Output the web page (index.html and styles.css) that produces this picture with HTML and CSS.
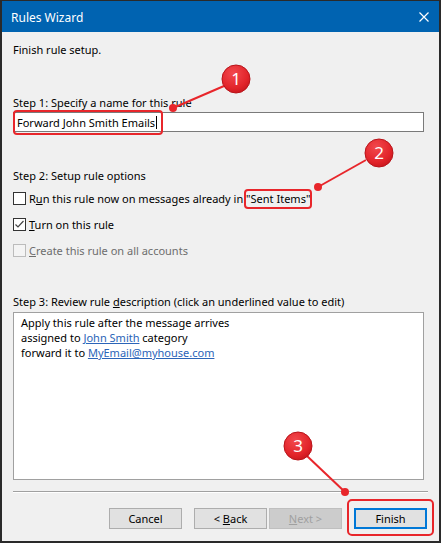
FILE: index.html
```html
<!DOCTYPE html>
<html lang="en">
<head>
  <meta charset="UTF-8" />
  <title>Rules Wizard</title>
  <link rel="stylesheet" href="styles.css">
</head>
<body>

  <div class="window">
    <div class="titlebar">
      <span class="title">Rules Wizard</span>
      <svg class="close" width="10" height="10" viewBox="0 0 10 10">
        <path d="M0.5 0.5 L9.5 9.5 M9.5 0.5 L0.5 9.5" stroke="#fff" stroke-width="1.2" />
      </svg>
    </div>

    <div class="content">
      <div class="intro">Finish rule setup.</div>

      <div class="step step-name">
        <div class="step-label">Step 1: Specify a name for this rule</div>
        <div class="textbox">
          <span class="callout callout-name">Forward John Smith Emails<span class="caret"></span></span>
        </div>
      </div>

      <div class="step step-options">
        <div class="step-label">Step 2: Setup rule options</div>
        <div class="option">
          <span class="check"></span>
          <span>R<u>u</u>n this rule now on messages already in <span class="callout callout-folder">"Sent Items"</span></span>
        </div>
        <div class="option">
          <span class="check checked">
            <svg width="11" height="11" viewBox="0 0 11 11"><path d="M1.5 5.5 L4 8 L9.5 2" fill="none" stroke="#444" stroke-width="1.2" /></svg>
          </span>
          <span><u>T</u>urn on this rule</span>
        </div>
        <div class="option disabled">
          <span class="check"></span>
          <span><u>C</u>reate this rule on all accounts</span>
        </div>
      </div>

      <div class="step step-review">
        <div class="step-label">Step 3: Review rule <u>d</u>escription (click an underlined value to edit)</div>
        <div class="description">
          <div>Apply this rule after the message arrives</div>
          <div>assigned to <a href="#">John Smith</a> category</div>
          <div>forward it to <a href="#">MyEmail@myhouse.com</a></div>
        </div>
      </div>

      <div class="separator"></div>

      <div class="buttons">
        <button class="btn">Cancel</button>
        <button class="btn back">&lt; <u>B</u>ack</button>
        <button class="btn" disabled><u>N</u>ext &gt;</button>
        <span class="callout callout-finish"><button class="btn default">Finish</button></span>
      </div>
    </div>

    <!-- red annotation marks drawn over the dialog -->
    <svg class="marks" width="441" height="543" viewBox="0 0 441 543">
      <defs>
        <radialGradient id="badge" cx="0.4" cy="0.3" r="0.75">
          <stop offset="0" stop-color="#f2494e" />
          <stop offset="0.7" stop-color="#e2242a" />
          <stop offset="1" stop-color="#c8161c" />
        </radialGradient>
      </defs>
      <g stroke="#e8262b" stroke-width="2" fill="#e8262b">
        <line x1="224" y1="86" x2="173" y2="108" />
        <circle cx="173" cy="108" r="4" stroke="none" />
        <line x1="366" y1="160" x2="318" y2="187" />
        <circle cx="318" cy="187" r="4" stroke="none" />
        <line x1="307" y1="456" x2="345" y2="492" />
        <circle cx="345" cy="492" r="4" stroke="none" />
      </g>
      <g class="badge">
        <circle cx="236" cy="79" r="14" />
        <text x="236" y="85">1</text>
      </g>
      <g class="badge">
        <circle cx="379" cy="153" r="14" />
        <text x="379" y="159">2</text>
      </g>
      <g class="badge">
        <circle cx="298" cy="446" r="14" />
        <text x="298" y="452">3</text>
      </g>
    </svg>
  </div>

</body>
</html>
```

FILE: styles.css
```css
:root {
  --title-bg: #0063b1;
  --dialog-bg: #f0f0f0;
  --text-color: #000;
  --muted: #6d6d6d;
  --mark-red: #e8262b;
  --link: #2b64b8;
}

body {
  margin: 0;
  font-family: 'Noto Sans', 'Open Sans', sans-serif;
  font-size: 11px;
  line-height: 15px;
  color: var(--text-color);
}

.window {
  position: relative;
  width: 441px;
  height: 543px;
  box-sizing: border-box;
  border: 2px solid #2a2a2a;
  border-top-width: 1px;
  background-color: var(--dialog-bg);
  overflow: hidden;
}

.titlebar {
  display: flex;
  align-items: center;
  justify-content: space-between;
  height: 31px;
  padding: 0 10px 0 9px;
  background-color: var(--title-bg);
  color: white;
}

.title {
  font-size: 12px;
  padding-top: 1px;
}

.close {
  display: block;
}

.content {
  padding: 10px 11px 0 11px;
}

.step-label {
  white-space: nowrap;
}

.step-name {
  margin-top: 38px;
}

.textbox {
  margin: 2px 4px 0 0;
  height: 18px;
  border: 1px solid #7a7a7a;
  background: white;
  display: flex;
  align-items: center;
  padding-left: 3px;
}

.caret {
  display: inline-block;
  width: 1px;
  height: 13px;
  margin-left: 1px;
  background: #000;
  vertical-align: -2px;
}

.callout {
  position: relative;
}

.callout::after {
  content: "";
  position: absolute;
  border: 2px solid var(--mark-red);
  border-radius: 4px;
  pointer-events: none;
}

.callout-name::after {
  inset: -5px -6px -5px -4px;
}

.callout-folder::after {
  inset: -2px -2px -3px -2px;
}

.callout-finish::after {
  inset: -9px -7px -7px -7px;
  border-radius: 5px;
}

.step-options {
  margin-top: 36px;
}

.option {
  display: flex;
  align-items: center;
  gap: 3px;
  margin-top: 11px;
  white-space: nowrap;
}

.step-options .step-label + .option {
  margin-top: 8px;
}

.check {
  width: 11px;
  height: 11px;
  border: 1px solid #333;
  background: white;
  display: flex;
  align-items: center;
  justify-content: center;
}

.option.disabled {
  color: var(--muted);
}

.option.disabled .check {
  border-color: #bcbcbc;
  background: #f4f4f4;
}

.step-review {
  margin-top: 36px;
}

.description {
  margin: 3px 4px 0 0;
  height: 162px;
  border: 1px solid #a0a0a0;
  background: white;
  padding: 2px 7px;
}

.description a {
  color: var(--link);
}

.separator {
  margin-top: 11px;
  border-top: 1px solid #a0a0a0;
  border-bottom: 1px solid #fff;
}

.buttons {
  display: flex;
  justify-content: flex-end;
  margin-top: 15px;
  padding-right: 1px;
}

.btn {
  width: 73px;
  height: 21px;
  padding: 0;
  font: inherit;
  color: var(--text-color);
  background: #e1e1e1;
  border: 1px solid #adadad;
}

.btn.back {
  margin: 0 2px 0 12px;
}

.btn:disabled {
  color: #a0a0a0;
  background: #cccccc;
  border-color: #bfbfbf;
}

.callout-finish {
  margin-left: 12px;
  display: flex;
}

.btn.default {
  border: 2px solid #0078d7;
}

.marks {
  position: absolute;
  top: -1px;
  left: -2px;
  pointer-events: none;
}

.badge circle {
  fill: url(#badge);
  stroke: #b8141a;
  stroke-width: 1;
}

.badge text {
  fill: white;
  font-family: 'Noto Sans', sans-serif;
  font-size: 17px;
  text-anchor: middle;
}
```
